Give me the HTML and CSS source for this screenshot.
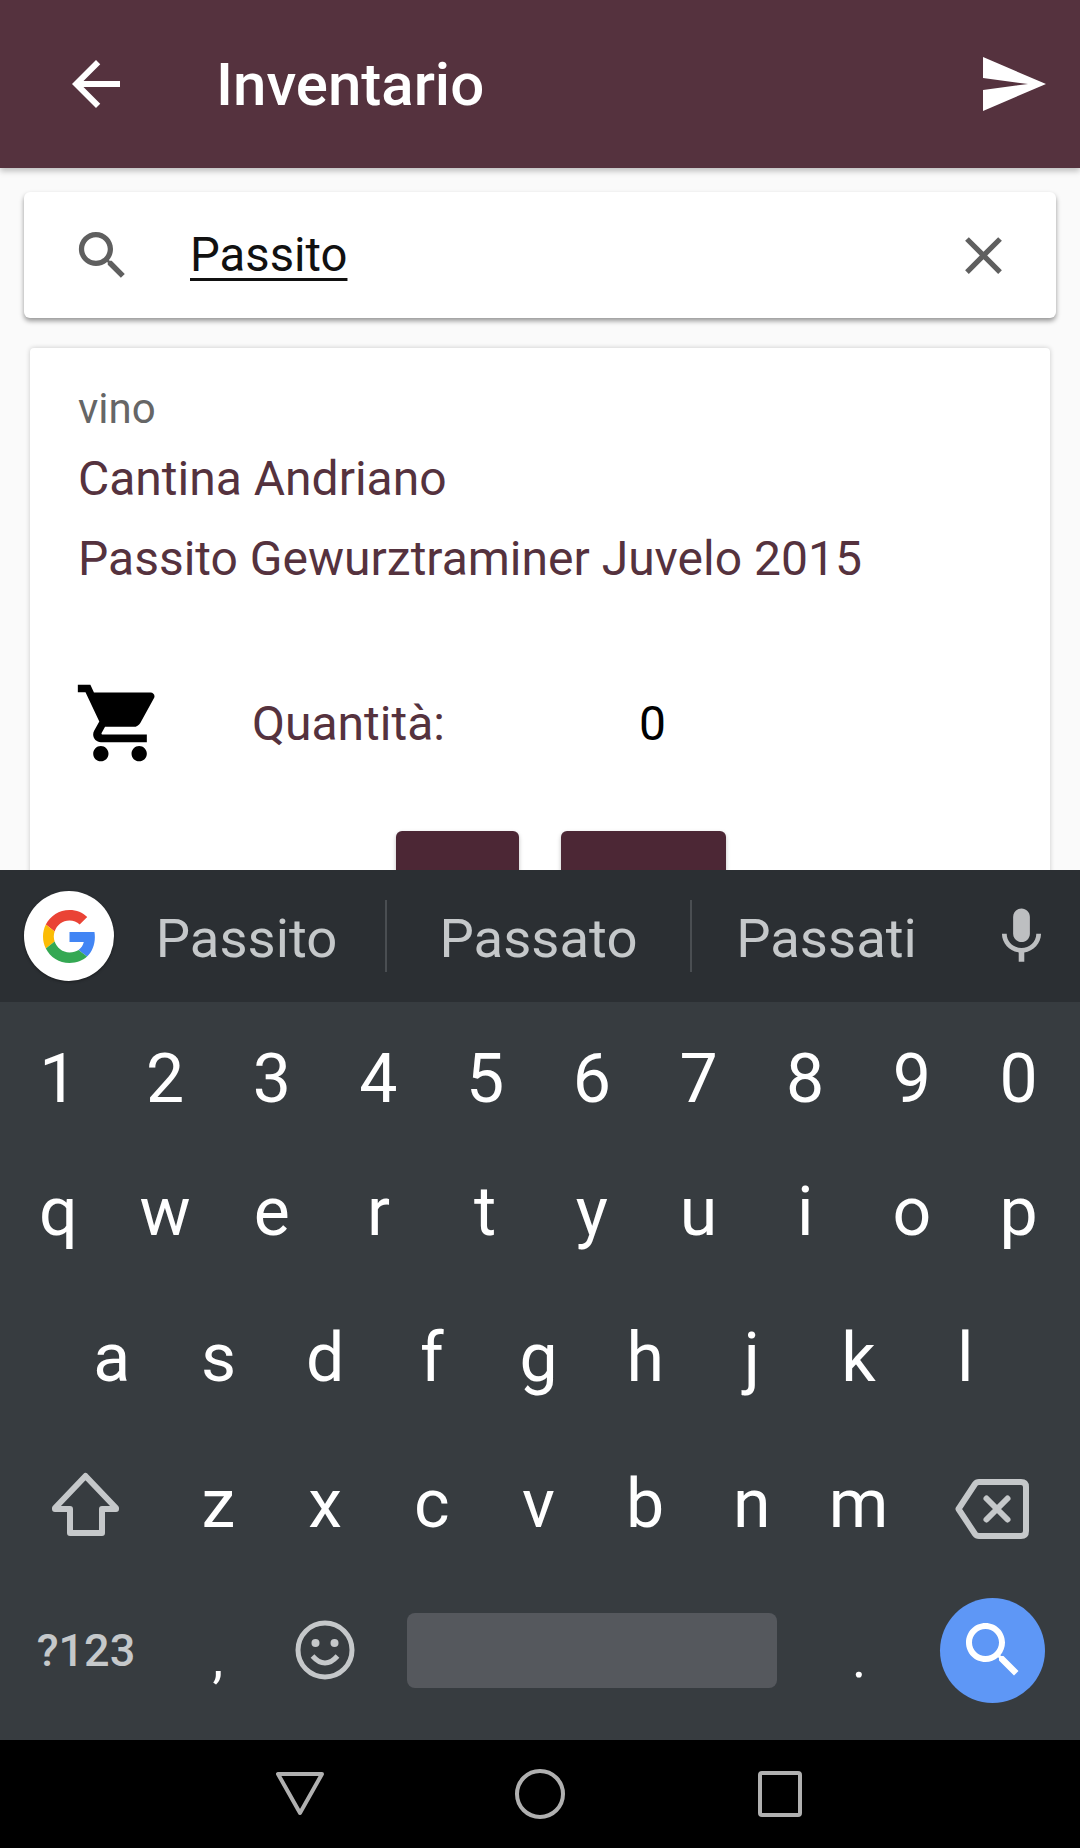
FILE: index.html
```html
<!DOCTYPE html>
<html lang="it">

<head>
    <meta charset="UTF-8">
    <meta name="viewport" content="width=device-width, initial-scale=1.0">
    <title>Inventario</title>
    <link rel="stylesheet" href="styles.css">
</head>

<body>
    <div class="screen">
        <div class="content">
            <header class="appbar">
                <svg class="appbar-back" viewBox="0 0 24 24"><path d="M20 11H7.83l5.59-5.59L12 4l-8 8 8 8 1.41-1.41L7.83 13H20v-2z"/></svg>
                <h1>Inventario</h1>
                <svg class="appbar-send" viewBox="0 0 24 24"><path d="M2.01 21L23 12 2.01 3 2 10l15 2-15 2z"/></svg>
            </header>

            <div class="searchbar">
                <svg class="search-icon" viewBox="0 0 24 24"><path d="M15.5 14h-.79l-.28-.27C15.41 12.59 16 11.11 16 9.5 16 5.91 13.09 3 9.5 3S3 5.91 3 9.5 5.91 16 9.5 16c1.61 0 3.09-.59 4.23-1.57l.27.28v.79l5 4.99L20.49 19l-4.99-5zm-6 0C7.01 14 5 11.99 5 9.5S7.01 5 9.5 5 14 7.01 14 9.5 11.99 14 9.5 14z"/></svg>
                <span class="search-text">Passito</span>
                <svg class="clear-icon" viewBox="0 0 24 24"><path d="M19 6.41L17.59 5 12 10.59 6.41 5 5 6.41 10.59 12 5 17.59 6.41 19 12 13.41 17.59 19 19 17.59 13.41 12z"/></svg>
            </div>

            <div class="card">
                <div class="card-type">vino</div>
                <div class="card-producer">Cantina Andriano</div>
                <div class="card-name">Passito Gewurztraminer Juvelo 2015</div>
                <div class="qty-row">
                    <svg class="cart-icon" viewBox="0 0 24 24"><path d="M7 18c-1.1 0-1.99.9-1.99 2S5.9 22 7 22s2-.9 2-2-.9-2-2-2zM1 2v2h2l3.6 7.59-1.35 2.45c-.16.28-.25.61-.25.96 0 1.1.9 2 2 2h12v-2H7.42c-.14 0-.25-.11-.25-.25l.03-.12.9-1.63h7.45c.75 0 1.41-.41 1.75-1.03l3.58-6.47c.08-.14.12-.31.12-.48 0-.55-.45-1-1-1H5.21l-.94-2H1zm16 16c-1.1 0-1.99.9-1.99 2s.89 2 1.99 2 2-.9 2-2-.9-2-2-2z"/></svg>
                    <span class="qty-label">Quantità:</span>
                    <span class="qty-value">0</span>
                </div>
                <div class="card-actions">
                    <div class="btn btn-small"></div>
                    <div class="btn btn-large"></div>
                </div>
            </div>
        </div>

        <div class="suggestions">
            <div class="g-cell">
                <div class="g-badge">
                    <svg viewBox="0 0 48 48">
                        <path fill="#ea4335" d="M24 9.5c3.54 0 6.71 1.22 9.21 3.6l6.85-6.85C35.9 2.38 30.47 0 24 0 14.62 0 6.51 5.38 2.56 13.22l7.98 6.19C12.43 13.72 17.74 9.5 24 9.5z"/>
                        <path fill="#4285f4" d="M46.98 24.55c0-1.57-.15-3.09-.38-4.55H24v9.02h12.94c-.58 2.96-2.26 5.48-4.78 7.18l7.73 6c4.51-4.18 7.09-10.36 7.09-17.65z"/>
                        <path fill="#fbbc05" d="M10.53 28.59c-.48-1.45-.76-2.99-.76-4.59s.27-3.14.76-4.59l-7.98-6.19C.92 16.46 0 20.12 0 24c0 3.88.92 7.54 2.56 10.78l7.97-6.19z"/>
                        <path fill="#34a853" d="M24 48c6.48 0 11.93-2.13 15.89-5.81l-7.73-6c-2.15 1.45-4.92 2.3-8.16 2.3-6.26 0-11.57-4.22-13.47-9.91l-7.98 6.19C6.51 42.62 14.62 48 24 48z"/>
                    </svg>
                </div>
            </div>
            <div class="sug sug-1">Passito</div>
            <div class="sug sug-2">Passato</div>
            <div class="sug sug-3">Passati</div>
            <div class="mic-cell">
                <svg class="mic-icon" viewBox="0 0 24 24"><path d="M12 14c1.66 0 3-1.34 3-3V5c0-1.66-1.34-3-3-3S9 3.34 9 5v6c0 1.66 1.34 3 3 3zm5.3-3c0 3-2.54 5.1-5.3 5.1S6.7 14 6.7 11H5c0 3.41 2.72 6.23 6 6.72V21h2v-3.28c3.28-.48 6-3.3 6-6.72h-1.7z"/></svg>
            </div>
        </div>

        <div class="keyboard">
            <div class="key-row key-row-digits">
                <span class="key">1</span><span class="key">2</span><span class="key">3</span><span class="key">4</span><span class="key">5</span><span class="key">6</span><span class="key">7</span><span class="key">8</span><span class="key">9</span><span class="key">0</span>
            </div>
            <div class="key-row">
                <span class="key">q</span><span class="key">w</span><span class="key">e</span><span class="key">r</span><span class="key">t</span><span class="key">y</span><span class="key">u</span><span class="key">i</span><span class="key">o</span><span class="key">p</span>
            </div>
            <div class="key-row">
                <span class="key">a</span><span class="key">s</span><span class="key">d</span><span class="key">f</span><span class="key">g</span><span class="key">h</span><span class="key">j</span><span class="key">k</span><span class="key">l</span>
            </div>
            <div class="key-row">
                <span class="key key-wide">
                    <svg class="shift-icon" viewBox="0 0 67 64"><path d="M33.500 4 L64 36 V37 H50 V61 H18 V37 H3 V36 Z"/></svg>
                </span>
                <span class="key">z</span><span class="key">x</span><span class="key">c</span><span class="key">v</span><span class="key">b</span><span class="key">n</span><span class="key">m</span>
                <span class="key key-wide">
                    <svg class="backspace-icon" viewBox="0 0 74 60">
                        <path d="M24 3 H66 Q71 3 71 8 V52 Q71 57 66 57 H24 Q21.500 57 20 55 L3.500 30 L20 5 Q21.500 3 24 3 Z"/>
                        <path d="M31.500 19.500 L52.500 40.500 M52.500 19.500 L31.500 40.500"/>
                    </svg>
                </span>
            </div>
            <div class="key-row">
                <span class="key key-wide key-sym">?123</span>
                <span class="key key-punct">,</span>
                <span class="key">
                    <svg class="emoji-icon" viewBox="0 0 60 60">
                        <circle cx="30" cy="30" r="27"/>
                        <circle class="dot" cx="20.500" cy="23" r="4"/>
                        <circle class="dot" cx="39.500" cy="23" r="4"/>
                        <path d="M17.500 36 Q30 50 42.500 36"/>
                    </svg>
                </span>
                <span class="key-space"><span class="spacebar"></span></span>
                <span class="key key-punct">.</span>
                <span class="key key-wide">
                    <span class="enter-key">
                        <svg viewBox="0 0 24 24"><path d="M15.5 14h-.79l-.28-.27C15.41 12.59 16 11.11 16 9.5 16 5.91 13.09 3 9.5 3S3 5.91 3 9.5 5.91 16 9.5 16c1.61 0 3.09-.59 4.23-1.57l.27.28v.79l5 4.99L20.49 19l-4.99-5zm-6 0C7.01 14 5 11.99 5 9.5S7.01 5 9.5 5 14 7.01 14 9.5 11.99 14 9.5 14z"/></svg>
                    </span>
                </span>
            </div>
        </div>

        <nav class="navbar">
            <svg viewBox="0 0 60 60"><path d="M8 10 H52 L30 49 Z"/></svg>
            <svg viewBox="0 0 60 60"><circle cx="30" cy="30" r="23"/></svg>
            <svg viewBox="0 0 60 60"><rect x="10" y="9" width="40" height="42" rx="2"/></svg>
        </nav>
    </div>
</body>

</html>
```

FILE: styles.css
```css
* {
    box-sizing: border-box;
}

body {
    margin: 0;
    padding: 0;
    background-color: #fafafa;
    font-family: Roboto, sans-serif;
}

.screen {
    width: 1080px;
    height: 1848px;
    display: flex;
    flex-direction: column;
    overflow: hidden;
}

.content {
    height: 870px;
    overflow: hidden;
}

/* app bar */
.appbar {
    height: 168px;
    display: flex;
    align-items: center;
    background-color: #55323e;
    box-shadow: 0 3px 6px rgba(0, 0, 0, 0.25);
    position: relative;
}

.appbar svg {
    width: 72px;
    height: 72px;
    fill: #fff;
    flex: none;
}

.appbar-back {
    margin-left: 60px;
}

.appbar h1 {
    flex: 1;
    margin: 0 0 0 84px;
    font-size: 60px;
    font-weight: 500;
    color: #fff;
}

.appbar-send {
    margin-right: 31px;
}

/* search */
.searchbar {
    height: 126px;
    margin: 24px 24px 0;
    display: flex;
    align-items: center;
    background: #fff;
    border-radius: 6px;
    box-shadow: 0 3px 5px rgba(0, 0, 0, 0.4);
}

.search-icon,
.clear-icon {
    width: 63px;
    height: 63px;
    fill: #5f5f5f;
    flex: none;
}

.search-icon {
    margin-left: 47px;
}

.search-text {
    flex: 1;
    margin-left: 56px;
    font-size: 47.25px;
    color: #111;
    line-height: 62px;
    text-decoration: underline;
    text-decoration-thickness: 3px;
    text-underline-offset: 7px;
}

.clear-icon {
    margin-right: 41px;
}

/* result card */
.card {
    margin: 30px 30px 0;
    height: 620px;
    padding: 31px 48px;
    background: #fff;
    border-radius: 4px;
    box-shadow: 0 0 5px rgba(0, 0, 0, 0.2);
}

.card-type {
    font-size: 42px;
    line-height: 60px;
    color: #666;
}

.card-producer,
.card-name {
    font-size: 48px;
    line-height: 80px;
    color: #55323e;
}

.qty-row {
    display: flex;
    align-items: center;
    margin-top: 78px;
}

.cart-icon {
    width: 92px;
    height: 92px;
    margin-left: -4px;
    flex: none;
}

.qty-label {
    width: 387px;
    margin-left: 86px;
    font-size: 48px;
    color: #55323e;
}

.qty-value {
    font-size: 48px;
    color: #000;
}

.card-actions {
    display: flex;
    gap: 42px;
    margin-top: 62px;
    margin-left: 318px;
}

.btn {
    height: 100px;
    background-color: #4c2735;
    border-radius: 6px;
    box-shadow: 0 2px 4px rgba(0, 0, 0, 0.25);
}

.btn-small {
    width: 123px;
}

.btn-large {
    width: 165px;
}

/* suggestion strip */
.suggestions {
    height: 132px;
    display: flex;
    align-items: center;
    background-color: #2b2f33;
    color: #c5c8ca;
    font-size: 54.5px;
}

.g-cell {
    width: 108px;
    flex: none;
    padding-left: 24px;
}

.g-badge {
    width: 90px;
    height: 90px;
    display: flex;
    align-items: center;
    justify-content: center;
    border-radius: 50%;
    background: #fff;
    box-shadow: 0 1px 3px rgba(0, 0, 0, 0.4);
}

.g-badge svg {
    width: 53px;
    height: 53px;
}

.sug {
    height: 72px;
    line-height: 76px;
    text-align: center;
    flex: none;
}

.sug-1 {
    width: 279px;
    border-right: 2px solid #4a4e52;
}

.sug-2 {
    width: 305px;
    border-right: 2px solid #4a4e52;
}

.sug-3 {
    width: 269px;
}

.mic-cell {
    flex: 1;
    display: flex;
    justify-content: center;
    padding-left: 2px;
}

.mic-icon {
    width: 67px;
    height: 67px;
    fill: #bdbfc1;
}

/* keyboard */
.keyboard {
    height: 738px;
    padding: 0 8px 17px 5px;
    display: flex;
    flex-direction: column;
    background-color: #373c40;
}

.key-row {
    height: 146px;
    display: flex;
    justify-content: center;
    align-items: center;
}

.key-row-digits {
    height: 137px;
    padding-top: 17px;
}

.key {
    width: 106.7px;
    flex: none;
    display: flex;
    justify-content: center;
    align-items: center;
    font-size: 68px;
    color: #fff;
}

.key-wide {
    width: 157px;
}

.key-sym {
    font-size: 45px;
    font-weight: 500;
    color: #c5c8ca;
}

.key-punct {
    font-size: 54px;
    padding-top: 17px;
}

.shift-icon {
    width: 67px;
    height: 64px;
    margin-left: -2px;
    fill: none;
    stroke: #c5c8ca;
    stroke-width: 6;
    stroke-linejoin: round;
}

.backspace-icon {
    width: 74px;
    height: 60px;
    margin-left: 3px;
    margin-top: 10px;
    fill: none;
    stroke: #c5c8ca;
    stroke-width: 6;
    stroke-linecap: round;
    stroke-linejoin: round;
}

.emoji-icon {
    width: 60px;
    height: 60px;
    fill: none;
    stroke: #c5c8ca;
    stroke-width: 5;
}

.emoji-icon .dot {
    fill: #c5c8ca;
    stroke: none;
}

.key-space {
    width: 428px;
    flex: none;
    display: flex;
    justify-content: center;
}

.spacebar {
    width: 370px;
    height: 75px;
    background-color: #55585d;
    border-radius: 8px;
}

.enter-key {
    width: 105px;
    height: 105px;
    margin-left: 3px;
    flex: none;
    display: flex;
    align-items: center;
    justify-content: center;
    border-radius: 50%;
    background-color: #5e97f6;
}

.enter-key svg {
    width: 72px;
    height: 72px;
    fill: #fff;
}

/* android nav bar */
.navbar {
    height: 108px;
    display: flex;
    justify-content: center;
    align-items: center;
    gap: 180px;
    background-color: #000;
}

.navbar svg {
    width: 60px;
    height: 60px;
    fill: none;
    stroke: #b0b0b0;
    stroke-width: 4;
    stroke-linejoin: round;
}
```
